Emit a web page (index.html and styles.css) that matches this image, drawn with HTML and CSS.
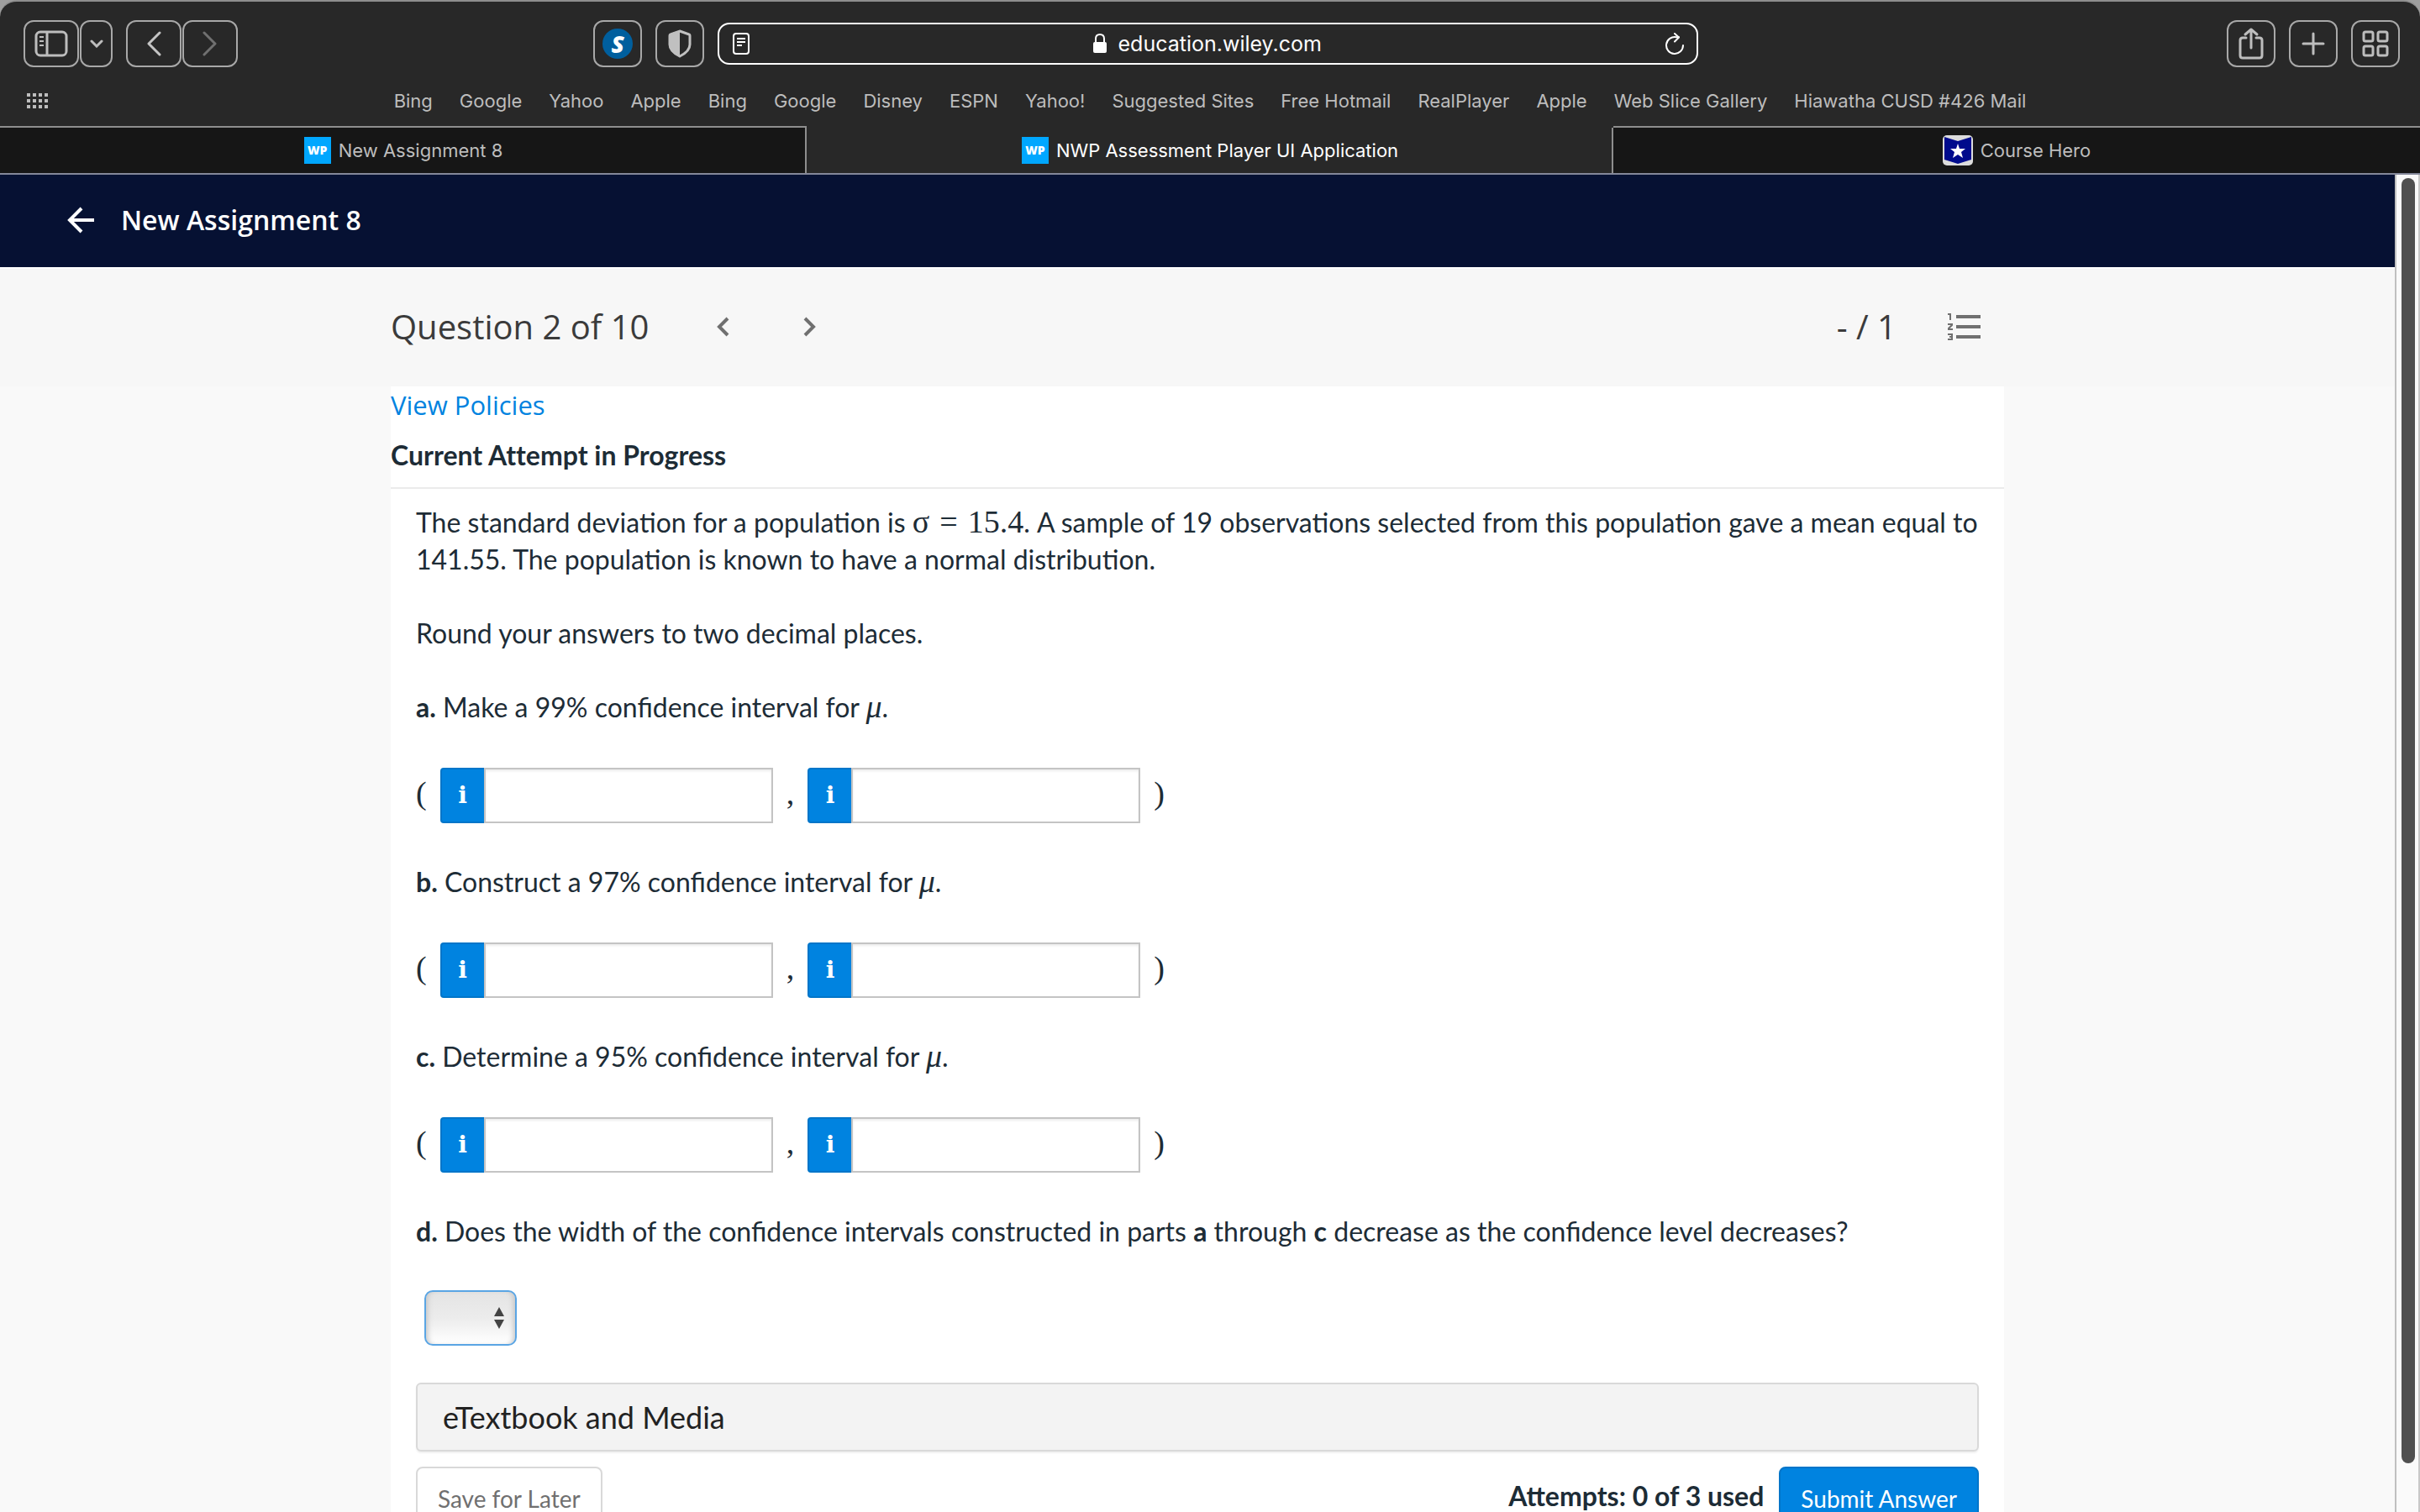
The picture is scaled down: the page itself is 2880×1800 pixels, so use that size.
FILE: index.html
```html
<!DOCTYPE html>
<html lang="en">
<head>
  <meta charset="UTF-8">
  <meta name="viewport" content="width=device-width, initial-scale=1.0">
  <title>NWP Assessment Player UI Application</title>
  <link rel="stylesheet" href="styles.css">
</head>
<body>
  <div class="browser">
    <!-- Toolbar -->
    <div class="toolbar">
      <div class="button-group">
        <button class="tool tool-wide" aria-label="Sidebar">
          <svg width="40" height="32" viewBox="0 0 40 32" fill="none" stroke="#bdbdbd" stroke-width="3">
            <rect x="2" y="2" width="36" height="28" rx="5"/>
            <path d="M15 2v28"/>
            <path d="M6 8h5M6 13h5M6 18h5" stroke-width="2"/>
          </svg>
        </button>
        <button class="tool tool-slim" aria-label="Tab groups">
          <svg width="16" height="10" viewBox="0 0 16 10" fill="none" stroke="#bdbdbd" stroke-width="3" stroke-linecap="round"><path d="M2 2l6 6 6-6"/></svg>
        </button>
      </div>
      <div class="button-group">
        <button class="tool tool-wide" aria-label="Back">
          <svg width="18" height="30" viewBox="0 0 18 30" fill="none" stroke="#c4c4c4" stroke-width="3" stroke-linecap="round" stroke-linejoin="round"><path d="M16 2L3 15l13 13"/></svg>
        </button>
        <button class="tool tool-wide" aria-label="Forward">
          <svg width="18" height="30" viewBox="0 0 18 30" fill="none" stroke="#707070" stroke-width="3" stroke-linecap="round" stroke-linejoin="round"><path d="M2 2l13 13L2 28"/></svg>
        </button>
      </div>
      <div class="address">
        <button class="tool" aria-label="Extension"><span class="ext-badge">S</span></button>
        <button class="tool" aria-label="Privacy report">
          <svg width="28" height="34" viewBox="0 0 28 34">
            <path d="M14 2l11 4q1 0 1 2v10q0 8-12 14Q2 26 2 18V8q0-2 1-2z" fill="none" stroke="#c0c0c0" stroke-width="3"/>
            <path d="M14 1v32Q1 27 1 18V8q0-2 2-3z" fill="#c0c0c0"/>
          </svg>
        </button>
        <div class="url-bar">
          <svg width="20" height="26" viewBox="0 0 20 26" fill="none" stroke="#fff" stroke-width="2">
            <rect x="1" y="1" width="18" height="24" rx="3"/>
            <path d="M5 7h10M5 11h10M5 15h6"/>
          </svg>
          <div class="url">
            <svg width="16" height="24" viewBox="0 0 16 24">
              <rect x="0" y="10" width="16" height="13" rx="2" fill="#fff"/>
              <path d="M3 11V6q0-5 5-5t5 5v5" fill="none" stroke="#fff" stroke-width="2"/>
            </svg>
            <span>education.wiley.com</span>
          </div>
          <svg width="24" height="26" viewBox="0 0 24 26" fill="none" stroke="#fff" stroke-width="2" stroke-linecap="round" stroke-linejoin="round">
            <path d="M22 15a10 10 0 1 1-8-9.800h3"/>
            <path d="M12 1l5 4.500-5 5"/>
          </svg>
        </div>
      </div>
      <div class="button-group tools-right">
        <button class="tool" aria-label="Share">
          <svg width="30" height="38" viewBox="0 0 30 38" fill="none" stroke="#bdbdbd" stroke-width="3" stroke-linecap="round" stroke-linejoin="round">
            <path d="M9 12H5q-3 0-3 3v18q0 3 3 3h20q3 0 3-3V15q0-3-3-3h-4"/>
            <path d="M15 24V2M8 8l7-6 7 6"/>
          </svg>
        </button>
        <button class="tool" aria-label="New tab">
          <svg width="28" height="28" viewBox="0 0 28 28" stroke="#bdbdbd" stroke-width="3" stroke-linecap="round"><path d="M14 2v24M2 14h24"/></svg>
        </button>
        <button class="tool" aria-label="Tab overview">
          <svg width="32" height="32" viewBox="0 0 32 32" fill="none" stroke="#bdbdbd" stroke-width="3">
            <rect x="2" y="2" width="11" height="11" rx="2"/><rect x="19" y="2" width="11" height="11" rx="2"/>
            <rect x="2" y="19" width="11" height="11" rx="2"/><rect x="19" y="19" width="11" height="11" rx="2"/>
          </svg>
        </button>
      </div>
    </div>

    <!-- Favorites bar -->
    <nav class="favorites">
      <button class="apps" aria-label="Show all favorites">
        <svg width="26" height="18" viewBox="0 0 26 18" stroke="#bdbdbd" stroke-width="4" stroke-dasharray="4 3"><path d="M0 2h26M0 9h26M0 16h26"/></svg>
      </button>
      <div class="links">
        <a href="#">Bing</a>
        <a href="#">Google</a>
        <a href="#">Yahoo</a>
        <a href="#">Apple</a>
        <a href="#">Bing</a>
        <a href="#">Google</a>
        <a href="#">Disney</a>
        <a href="#">ESPN</a>
        <a href="#">Yahoo!</a>
        <a href="#">Suggested Sites</a>
        <a href="#">Free Hotmail</a>
        <a href="#">RealPlayer</a>
        <a href="#">Apple</a>
        <a href="#">Web Slice Gallery</a>
        <a href="#">Hiawatha CUSD #426 Mail</a>
      </div>
    </nav>

    <!-- Tabs -->
    <div class="tabs">
      <a class="tab" href="#"><span class="wp">WP</span>New Assignment 8</a>
      <a class="tab active" href="#"><span class="wp">WP</span>NWP Assessment Player UI Application</a>
      <a class="tab" href="#">
        <svg width="36" height="36" viewBox="0 0 36 36">
          <rect width="36" height="36" rx="5" fill="#dcdcdc"/>
          <path d="M2 2l16 5 16-5v27l-16 5-16-5z" fill="#000b8c"/>
          <path d="M18 10l2 6h7l-5 4 2 7-6-4-6 4 2-7-5-4h7z" fill="#fff"/>
        </svg>
        Course Hero
      </a>
    </div>
  </div>

  <div class="viewport">
    <div class="page">
      <header class="header">
        <a class="back" href="#" aria-label="Back to assignments">
          <svg width="32" height="32" viewBox="0 0 32 32" fill="none" stroke="#fff" stroke-width="4"><path d="M32 16H4M17 2L3 16l14 14"/></svg>
        </a>
        <h1>New Assignment 8</h1>
      </header>

      <div class="question-bar">
        <div class="column">
          <h2>Question 2 of 10</h2>
          <button class="step" aria-label="Previous question">
            <svg width="16" height="24" viewBox="0 0 16 24" fill="none" stroke="#707070" stroke-width="4"><path d="M14 2L4 12l10 10"/></svg>
          </button>
          <button class="step" aria-label="Next question">
            <svg width="16" height="24" viewBox="0 0 16 24" fill="none" stroke="#707070" stroke-width="4"><path d="M2 2l10 10L2 22"/></svg>
          </button>
          <span class="score">- / 1</span>
          <button class="step list" aria-label="Question list">
            <svg width="40" height="32" viewBox="0 0 40 32" fill="none" stroke="#707070">
              <path d="M11 4h29M11 16h29M11 28h29" stroke-width="4"/>
              <path d="M1 1h3v7M1 13h5v1l-4 4v1h5M1 25h5v6H1M3 28h3" stroke-width="2"/>
            </svg>
          </button>
        </div>
      </div>

      <main class="panel">
        <a class="policies" href="#">View Policies</a>
        <h3>Current Attempt in Progress</h3>

        <form class="question">
          <p>The standard deviation for a population is <span class="math">σ<span class="rel">=</span>15.4</span>. A sample of 19 observations selected from this population gave a mean equal to 141.55. The population is known to have a normal distribution.</p>
          <p>Round your answers to two decimal places.</p>

          <p><b>a.</b> Make a 99% confidence interval for <i class="math">μ</i>.</p>
          <div class="interval">
            <span class="math">(</span>
            <div class="answer"><button type="button" class="info" aria-label="Information">i</button><input type="text" aria-label="Part a lower limit"></div>
            <span class="math">,</span>
            <div class="answer"><button type="button" class="info" aria-label="Information">i</button><input type="text" aria-label="Part a upper limit"></div>
            <span class="math">)</span>
          </div>

          <p><b>b.</b> Construct a 97% confidence interval for <i class="math">μ</i>.</p>
          <div class="interval">
            <span class="math">(</span>
            <div class="answer"><button type="button" class="info" aria-label="Information">i</button><input type="text" aria-label="Part b lower limit"></div>
            <span class="math">,</span>
            <div class="answer"><button type="button" class="info" aria-label="Information">i</button><input type="text" aria-label="Part b upper limit"></div>
            <span class="math">)</span>
          </div>

          <p><b>c.</b> Determine a 95% confidence interval for <i class="math">μ</i>.</p>
          <div class="interval">
            <span class="math">(</span>
            <div class="answer"><button type="button" class="info" aria-label="Information">i</button><input type="text" aria-label="Part c lower limit"></div>
            <span class="math">,</span>
            <div class="answer"><button type="button" class="info" aria-label="Information">i</button><input type="text" aria-label="Part c upper limit"></div>
            <span class="math">)</span>
          </div>

          <p><label for="partD"><b>d.</b> Does the width of the confidence intervals constructed in parts <b>a</b> through <b>c</b> decrease as the confidence level decreases?</label></p>
          <div class="select">
            <select id="partD">
              <option value=""></option>
              <option value="yes">Yes</option>
              <option value="no">No</option>
            </select>
            <svg width="14" height="26" viewBox="0 0 14 26" fill="#444"><path d="M7 0l6 11H1zM7 26l6-11H1z"/></svg>
          </div>

          <button type="button" class="media">eTextbook and Media</button>

          <div class="actions">
            <button type="button" class="save">Save for Later</button>
            <b>Attempts: 0 of 3 used</b>
            <button type="submit" class="submit">Submit Answer</button>
          </div>
        </form>
      </main>
    </div>

    <div class="scrollbar"><div class="thumb"></div></div>
  </div>
</body>
</html>
```
FILE: styles.css
```css
* { margin: 0; padding: 0; box-sizing: border-box; }
body { height: 100vh; overflow: hidden; display: flex; flex-direction: column; background-color: #9e9e9e; font-family: Lato, sans-serif; font-size: 32px; line-height: 44px; color: #1d2c36; }
a { color: inherit; text-decoration: none; }
button { font: inherit; color: inherit; background: none; border: none; cursor: pointer; }
svg { display: block; flex: none; }

/* Browser window */
.browser { background-color: #282828; border-top: 2px solid #8e8e8e; border-radius: 20px 20px 0 0; font-family: Inter, sans-serif; font-size: 22px; line-height: 28px; color: #bdbdbd; }
.toolbar { display: flex; align-items: center; padding: 22px 24px 0 28px; }
.button-group { display: flex; gap: 1px; margin-right: 16px; }
.tool { display: flex; align-items: center; justify-content: center; width: 58px; height: 56px; border: 2px solid #a8a8a8; border-radius: 12px; flex: none; }
.tool-wide { width: 66px; }
.tool-slim { width: 39px; }
.ext-badge { width: 36px; height: 36px; border-radius: 50%; background-color: #005f9e; color: #fff; font: italic 800 28px/36px "Open Sans", sans-serif; text-align: center; }
.address { display: flex; align-items: center; gap: 16px; width: 46.5%; margin-left: 14.4%; }
.url-bar { flex: 1; display: flex; align-items: center; justify-content: space-between; height: 50px; padding: 0 14px 0 16px; border: 2px solid #fff; border-radius: 14px; }
.url { display: flex; align-items: center; gap: 14px; color: #fff; font-size: 25px; }
.tools-right { gap: 16px; margin: 0 0 0 auto; }

.favorites { display: grid; grid-template-columns: 1fr auto 1fr; align-items: center; height: 70px; padding: 10px 32px 0; }
.links { display: flex; gap: 32px; white-space: nowrap; }

.tabs { display: flex; border-bottom: 2px solid #84889a; }
.tab { flex: 1; display: flex; align-items: center; justify-content: center; gap: 9px; height: 56px; background-color: #161616; border-top: 2px solid #8e8e8e; }
.tab.active { background-color: #282828; color: #fff; border-top-color: #282828; box-shadow: -2px 0 #8e8e8e, inset -2px 0 #8e8e8e; z-index: 1; }
.wp { width: 32px; height: 32px; background-color: #00a7ff; color: #fff; font: 800 14px/32px "Open Sans", sans-serif; text-align: center; }

/* Page */
.viewport { flex: 1; min-height: 0; display: flex; background-color: #f9f9f9; }
.page { flex: 1; overflow: hidden; }
.header { display: flex; align-items: center; gap: 32px; height: 110px; padding: 0 80px 2px; background-color: #061133; color: #fff; }
.header h1 { font: 600 32px/44px "Open Sans", sans-serif; }
.question-bar { height: 142px; border-top: 2px solid #fdfdfd; background-color: #f7f7f7; color: #3b3b3b; font-family: "Open Sans", sans-serif; font-size: 40px; }
.column { display: flex; align-items: center; max-width: 1920px; height: 138px; margin: 0 auto; }
.question-bar h2 { font-size: 40px; font-weight: 400; margin-right: 48px; }
.step { padding: 0 32px; margin-right: 24px; }
.score { margin-left: auto; }
.list { padding: 0; margin: 0 28px 0 60px; }

.panel { max-width: 1920px; min-height: 100%; margin: 0 auto; background-color: #fff; }
.policies { display: block; margin-bottom: 16px; color: #0083e0; font-family: "Open Sans", sans-serif; font-size: 31px; }
.panel h3 { padding-bottom: 16px; border-bottom: 2px solid #ebebeb; font-size: 32px; font-variant-ligatures: none; }
.question { padding: 18px 30px 0; }
.question p { margin-bottom: 44px; }
.math { font-family: "Liberation Serif", serif; font-size: 38px; line-height: 38px; }
.rel { margin: 0 12px; }

.interval { display: flex; align-items: center; gap: 16px; margin: 50px 0 48px; }
.interval .math { padding-bottom: 6px; }
.answer { display: flex; width: 396px; height: 66px; }
.info { width: 52px; background-color: #0083e0; border: 2px solid #0075c9; border-right: none; border-radius: 4px 0 0 4px; color: #fff; font-family: "DejaVu Serif", serif; font-weight: bold; font-size: 28px; }
.answer input { flex: 1; min-width: 0; padding: 0 12px; border: 2px solid #c4c4c4; font: inherit; box-shadow: inset 0 2px 3px rgba(0, 0, 0, 0.08); }

.select { position: relative; width: 110px; height: 66px; margin: 48px 0 44px 10px; }
.select select { appearance: none; width: 100%; height: 100%; padding: 0 32px 0 12px; border: 2px solid #5aa5e4; border-radius: 10px; background: linear-gradient(#e4e4e4, #ececec 50%, #fff); box-shadow: inset 6px 0 6px -4px #c4c4c4, inset -6px 0 6px -4px #c4c4c4; font: inherit; }
.select svg { position: absolute; top: 20px; right: 14px; pointer-events: none; }

.media { display: block; width: 100%; height: 82px; padding: 0 30px; background-color: #f3f3f3; border: 2px solid #d9d9d9; border-radius: 6px; box-shadow: 0 2px 2px rgba(0, 0, 0, 0.06); color: #222; font-size: 36px; text-align: left; }
.actions { display: flex; align-items: center; margin-top: 18px; }
.actions b { margin: 0 18px 0 auto; padding-bottom: 6px; line-height: 38px; }
.save, .submit { height: 76px; padding: 0 24px; border: 2px solid #d9d9d9; border-radius: 8px; color: #707070; font-size: 28px; }
.submit { background-color: #0083e0; border-color: #0075c9; color: #fff; }

.scrollbar { width: 30px; padding: 4px 4px 58px 6px; background-color: #fafafa; border-left: 2px solid #c0c0c0; border-right: 2px solid #c8c8c8; }
.thumb { width: 16px; height: 100%; border-radius: 8px; background-color: #505050; }

/* Spacing between the stacked blocks of the question */
.question p:has(+ .interval), .question p:has(+ .select) { margin-bottom: 0; }
```
